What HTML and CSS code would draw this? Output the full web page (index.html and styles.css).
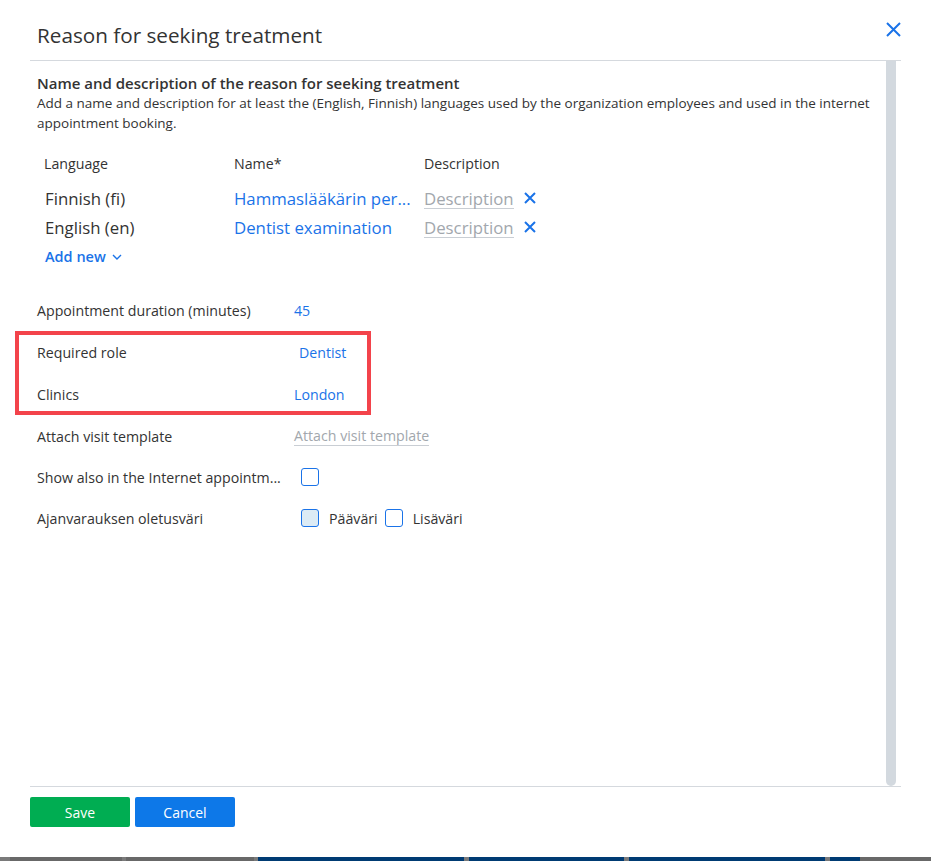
FILE: index.html
```html
<!DOCTYPE html>
<html>
<head>
    <title>Reason for seeking treatment</title>
    <link rel="stylesheet" href="styles.css">
</head>
<body>
    <div class="page">
        <div class="dialog">
            <div class="dialog-header">
                <h1 class="dialog-title">Reason for seeking treatment</h1>
                <button class="close-btn" aria-label="Close">
                    <svg width="15" height="15" viewBox="0 0 15 15"><path d="M1 1L14 14M14 1L1 14" stroke="#1a73e8" stroke-width="2" fill="none"/></svg>
                </button>
            </div>

            <div class="dialog-body">
                <div class="content">
                    <h2 class="section-title">Name and description of the reason for seeking treatment</h2>
                    <p class="section-desc">Add a name and description for at least the (English, Finnish) languages used by the organization employees and used in the internet appointment booking.</p>

                    <div class="lang-table">
                        <div class="lang-head">
                            <span class="col-lang">Language</span>
                            <span class="col-name">Name*</span>
                            <span class="col-desc">Description</span>
                        </div>
                        <div class="lang-row">
                            <span class="col-lang">Finnish (fi)</span>
                            <span class="col-name link">Hammaslääkärin per...</span>
                            <span class="col-desc"><span class="placeholder">Description</span>
                                <svg class="remove" width="12" height="12" viewBox="0 0 12 12"><path d="M1 1L11 11M11 1L1 11" stroke="#1a73e8" stroke-width="2" fill="none"/></svg>
                            </span>
                        </div>
                        <div class="lang-row">
                            <span class="col-lang">English (en)</span>
                            <span class="col-name link">Dentist examination</span>
                            <span class="col-desc"><span class="placeholder">Description</span>
                                <svg class="remove" width="12" height="12" viewBox="0 0 12 12"><path d="M1 1L11 11M11 1L1 11" stroke="#1a73e8" stroke-width="2" fill="none"/></svg>
                            </span>
                        </div>
                        <a class="add-new" href="#">Add new
                            <svg width="10" height="6" viewBox="0 0 10 6"><path d="M1 1L5 5L9 1" stroke="#1a73e8" stroke-width="1.4" fill="none"/></svg>
                        </a>
                    </div>

                    <div class="form">
                        <div class="form-row">
                            <span class="form-label">Appointment duration (minutes)</span>
                            <span class="link">45</span>
                        </div>
                        <div class="highlight">
                            <div class="form-row">
                                <span class="form-label">Required role</span>
                                <span class="link shift">Dentist</span>
                            </div>
                            <div class="form-row">
                                <span class="form-label">Clinics</span>
                                <span class="link">London</span>
                            </div>
                        </div>
                        <div class="form-row">
                            <span class="form-label">Attach visit template</span>
                            <span class="placeholder">Attach visit template</span>
                        </div>
                        <div class="form-row short">
                            <span class="form-label">Show also in the Internet appointm...</span>
                            <span class="checkbox"></span>
                        </div>
                        <div class="form-row">
                            <span class="form-label">Ajanvarauksen oletusväri</span>
                            <span class="color-options">
                                <span class="checkbox filled"></span><span class="option-text">Pääväri</span>
                                <span class="checkbox"></span><span class="option-text">Lisäväri</span>
                            </span>
                        </div>
                    </div>
                </div>
                <div class="scrollbar"></div>
            </div>

            <div class="dialog-footer">
                <button class="btn btn-save">Save</button>
                <button class="btn btn-cancel">Cancel</button>
            </div>
        </div>

        <div class="taskbar">
            <span class="seg gray" style="width: 10px"></span>
            <span class="seg dark" style="width: 112px"></span>
            <span class="seg gray" style="width: 4px"></span>
            <span class="seg dark" style="width: 128px"></span>
            <span class="seg gray" style="width: 4px"></span>
            <span class="seg navy" style="width: 206px"></span>
            <span class="seg gray" style="width: 5px"></span>
            <span class="seg navy" style="width: 155px"></span>
            <span class="seg gray" style="width: 5px"></span>
            <span class="seg navy" style="width: 196px"></span>
            <span class="seg gray" style="width: 5px"></span>
            <span class="seg navy" style="width: 30px"></span>
            <span class="seg dark" style="flex: 1"></span>
        </div>
    </div>
</body>
</html>
```

FILE: styles.css
```css
body {
    margin: 0;
    font-family: "Open Sans", "Noto Sans", sans-serif;
    color: #333;
    background-color: #fff;
}

.page {
    display: flex;
    flex-direction: column;
    height: 861px;
}

.dialog {
    display: flex;
    flex-direction: column;
    height: 857px;
}

/* header */
.dialog-header {
    display: flex;
    align-items: flex-start;
    justify-content: space-between;
    margin: 0 30px;
    height: 60px;
    border-bottom: 1px solid #d5d9de;
}

.dialog-title {
    margin: 22px 0 0 7px;
    font-size: 20.7px;
    font-weight: 400;
    line-height: 26px;
    color: #333;
}

.close-btn {
    margin-top: 22px;
    padding: 0;
    border: none;
    background: none;
    cursor: pointer;
}

/* body */
.dialog-body {
    display: flex;
    height: 725px;
    margin: 0 30px;
}

.content {
    flex: 1;
    padding: 12px 0 0 7px;
}

.scrollbar {
    width: 10px;
    margin-right: 5px;
    background-color: #d3d9df;
    border-radius: 0 0 5px 5px;
}

.section-title {
    margin: 0;
    font-size: 15px;
    font-weight: 600;
    line-height: 20px;
}

.section-desc {
    margin: 0;
    font-size: 13.5px;
    line-height: 20px;
}

.lang-table {
    margin-top: 16px;
    padding-left: 7px;
}

.lang-head,
.lang-row {
    display: flex;
    align-items: center;
}

.lang-head {
    height: 29px;
    margin-bottom: 6px;
    font-size: 14.2px;
}

.lang-row {
    height: 29px;
    font-size: 16.8px;
}

.col-lang {
    width: 190px;
}

.col-name {
    width: 190px;
}

.col-desc {
    display: flex;
    align-items: center;
}

.lang-row .col-lang {
    padding-left: 1px;
    width: 189px;
}

.link {
    color: #1a73e8;
}

.placeholder {
    color: #a2a7ad;
    border-bottom: 1px solid #c9ced4;
    line-height: 1.25;
}

.remove {
    margin-left: 10px;
}

.add-new {
    display: inline-flex;
    align-items: center;
    gap: 6px;
    height: 29px;
    padding-left: 1px;
    font-size: 14.5px;
    font-weight: 600;
    color: #1a73e8;
    text-decoration: none;
}

/* form */
.form {
    margin-top: 18px;
    font-size: 14.2px;
}

.form-row {
    display: flex;
    align-items: center;
    height: 42px;
}

.form-row.short {
    height: 40px;
}

.form-label {
    width: 257px;
}

.shift {
    padding-left: 5px;
}

.highlight {
    box-sizing: border-box;
    width: 356px;
    margin-left: -22px;
    padding-left: 22px;
    outline: 4px solid #f3434b;
    outline-offset: -4px;
}

.form .placeholder {
    line-height: 18px;
}

.checkbox {
    display: inline-block;
    box-sizing: border-box;
    width: 18px;
    height: 18px;
    margin-left: 7px;
    border: 1.5px solid #1a73e8;
    border-radius: 3px;
    background-color: #fff;
}

.checkbox.filled {
    background-color: #dcebf5;
}

.color-options {
    display: flex;
    align-items: center;
}

.option-text {
    margin-left: 10px;
}

/* footer */
.dialog-footer {
    display: flex;
    gap: 5px;
    margin: 0 30px;
    padding-top: 10px;
    border-top: 1px solid #d5d9de;
}

.btn {
    width: 100px;
    height: 30px;
    border: none;
    border-radius: 2px;
    font-family: "Open Sans", sans-serif;
    font-size: 14px;
    color: #fff;
    cursor: pointer;
}

.btn-save {
    background-color: #00ad52;
}

.btn-cancel {
    background-color: #0d78e8;
}

/* page behind the dialog */
.taskbar {
    display: flex;
    height: 4px;
    background-color: #6b6b6b;
}

.seg.gray {
    background-color: #7a7a7a;
}

.seg.dark {
    background-color: #686868;
}

.seg.navy {
    background-color: #003b73;
}
```
